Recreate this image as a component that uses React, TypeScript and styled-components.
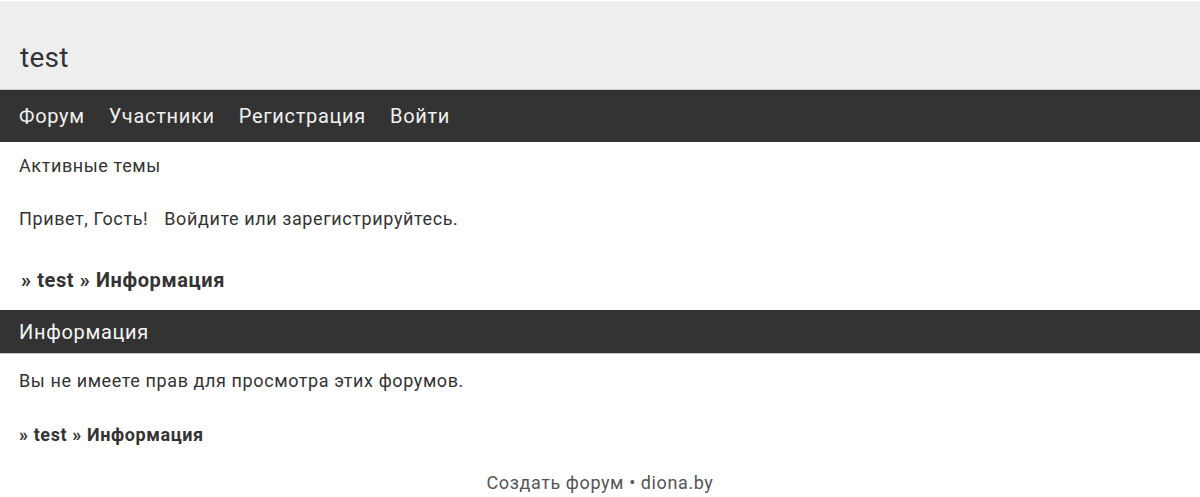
import React from "react";
import styled, { createGlobalStyle } from "styled-components";

const Global = createGlobalStyle`
  html, body { margin: 0; padding: 0; background: #fff; }
  body { font-family: Roboto, "Noto Sans", sans-serif; color: #333; }
  a { text-decoration: none; color: inherit; }
`;

const Page = styled.div`
  padding-top: 1px;
  display: flex;
  flex-direction: column;
`;

const Header = styled.header`
  height: 89px;
  background: #eeeeee;
  border-bottom: 1px solid #c8c8c8;
  display: flex;
  align-items: flex-end;
  padding: 0 20px 13px;
  box-sizing: border-box;
`;

const Title = styled.h1`
  margin: 0;
  font-size: 28px;
  line-height: 36px;
  font-weight: 400;
  letter-spacing: 0.25px;
  color: #333;
`;

const Nav = styled.nav`
  height: 52px;
  background: #333333;
  display: flex;
  align-items: center;
  padding-left: 19px;
  gap: 24px;
`;

const NavLink = styled.a`
  color: #f0f0f0;
  font-size: 20px;
  line-height: 24px;
  letter-spacing: 0.7px;
`;

const Content = styled.div`
  padding: 0 19px;
`;

const Line = styled.div<{ $top: number; $size?: number; $bold?: boolean }>`
  margin-top: ${(p) => p.$top}px;
  font-size: ${(p) => p.$size ?? 18}px;
  line-height: 24px;
  letter-spacing: 0.6px;
  font-weight: ${(p) => (p.$bold ? 700 : 400)};
  color: #333;
`;

const Gap = styled.span`
  display: inline-block;
  width: 16px;
`;

const Crumbs = styled(Line)`
  padding-left: ${(p) => (p.$size === 20 ? 2 : 0)}px;
`;

const Bar = styled.div`
  margin-top: 18px;
  height: 43px;
  background: #333333;
  border-bottom: 1px solid #c8c8c8;
  display: flex;
  align-items: center;
  padding-left: 19px;
  color: #f5f5f5;
  font-size: 20px;
  letter-spacing: 0.7px;
`;

const Footer = styled.footer`
  margin-top: 24px;
  text-align: center;
  font-size: 18px;
  line-height: 24px;
  letter-spacing: 0.6px;
  color: #555;
`;

export default function App() {
  return (
    <>
      <Global />
      <Page>
        <Header>
          <Title>test</Title>
        </Header>
        <Nav>
          <NavLink href="#">Форум</NavLink>
          <NavLink href="#">Участники</NavLink>
          <NavLink href="#">Регистрация</NavLink>
          <NavLink href="#">Войти</NavLink>
        </Nav>
        <Content>
          <Line $top={12}>Активные темы</Line>
          <Line $top={29}>
            Привет, Гость!<Gap />Войдите или зарегистрируйтесь.
          </Line>
          <Crumbs $top={37} $size={20} $bold>
            » test » Информация
          </Crumbs>
        </Content>
        <Bar>Информация</Bar>
        <Content>
          <Line $top={15}>Вы не имеете прав для просмотра этих форумов.</Line>
          <Crumbs $top={30} $bold>
            » test » Информация
          </Crumbs>
        </Content>
        <Footer>Создать форум • diona.by</Footer>
      </Page>
    </>
  );
}
